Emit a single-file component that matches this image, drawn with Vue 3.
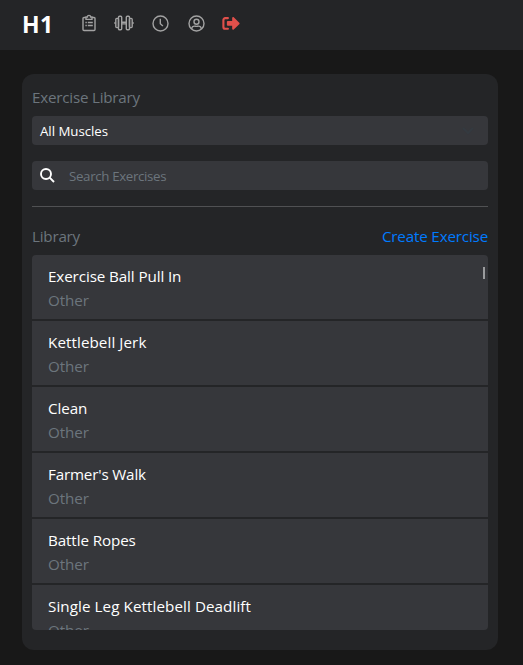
<script setup>
const exercises = [
  { name: 'Exercise Ball Pull In', tracking: 'normal' },
  { name: 'Kettlebell Jerk', tracking: 'wide' },
  { name: 'Clean', tracking: 'normal' },
  { name: "Farmer's Walk", tracking: 'tight' },
  { name: 'Battle Ropes', tracking: 'normal' },
  { name: 'Single Leg Kettlebell Deadlift', tracking: 'wide' },
]
</script>

<template>
  <div class="page">
    <header class="nav">
      <span class="brand">H1</span>
      <nav class="links">
        <svg class="icon clip" viewBox="0 0 14 18">
          <path d="M4 3.500H2a1 1 0 0 0-1 1v11a1 1 0 0 0 1 1h10a1 1 0 0 0 1-1v-11a1 1 0 0 0-1-1h-2M4 3h1.400a1.600 1.600 0 0 1 3.200 0H10v2.400H4z" />
          <path d="M3.400 8.500h1.400M5.800 8.500h5M3.400 11.500h1.400M5.800 11.500h5" />
        </svg>
        <svg class="icon bell" viewBox="0 0 20 16">
          <path d="M.2 8h1.600M18.200 8h1.600M7.900 7.200h4.200M7.900 8.900h4.200" />
          <rect x="1.800" y="3.400" width="2.700" height="9.200" rx="1" />
          <rect x="4.500" y="1.300" width="3.200" height="13.400" rx="1" />
          <rect x="12.300" y="1.300" width="3.200" height="13.400" rx="1" />
          <rect x="15.500" y="3.400" width="2.700" height="9.200" rx="1" />
        </svg>
        <svg class="icon round" viewBox="0 0 17 17">
          <circle cx="8.500" cy="8.500" r="7.500" />
          <path d="M8.300 3.800v5l2.600 2.300" />
        </svg>
        <svg class="icon round" viewBox="0 0 17 17">
          <circle cx="8.500" cy="8.500" r="7.500" />
          <circle cx="8.500" cy="6.700" r="2.500" />
          <path d="M3.500 14c.4-2 1.500-2.900 3-2.900.8 0 1.200.3 2 .3s1.200-.3 2-.3c1.500 0 2.600.9 3 2.900" />
        </svg>
        <svg class="exit" viewBox="0 0 17 14">
          <path class="door" d="M5.600 2H3a1.700 1.700 0 0 0-1.700 1.700v6.600A1.700 1.700 0 0 0 3 12h2.600" />
          <path class="arrow" d="M5.400 4.700h4.200V2c0-1 .9-1.300 1.500-.7l5.200 5c.4.400.4 1 0 1.400l-5.200 5c-.6.600-1.500.3-1.500-.7V9.300H5.400c-.5 0-.8-.3-.8-.8v-3c0-.5.3-.8.8-.8z" />
        </svg>
      </nav>
    </header>

    <main class="card">
      <h1 class="title">Exercise Library</h1>
      <div class="field select">
        <span class="value">All Muscles</span>
        <svg class="chevron" viewBox="0 0 12 8"><path d="M1 1l5 5 5-5" /></svg>
      </div>
      <label class="field search">
        <svg class="glass" viewBox="0 0 15 15">
          <circle cx="6" cy="6" r="5" /><path d="M9.700 9.700l4.300 4.300" />
        </svg>
        <span class="placeholder">Search Exercises</span>
      </label>
      <div class="rule"></div>
      <div class="heading">
        <span class="label">Library</span>
        <a class="create">Create Exercise</a>
      </div>
      <div class="list">
        <div v-for="item in exercises" :key="item.name" class="item">
          <div class="name" :class="item.tracking">{{ item.name }}</div>
          <div class="muscle">Other</div>
        </div>
        <div class="thumb"></div>
      </div>
    </main>
  </div>
</template>

<style>
body { background: #181818; overflow: hidden; }
</style>

<style scoped>
* { box-sizing: border-box; }
.page {
  width: 523px;
  height: 665px;
  overflow: hidden;
  background: #181818;
  font-family: "Open Sans", "Noto Sans", sans-serif;
  font-size: 15.2px;
  line-height: 24px;
  letter-spacing: -0.1px;
  color: #fff;
}
.nav { display: flex; align-items: center; height: 50px; padding: 0 22px; background: #242527; }
.brand { width: 59px; font-size: 23px; font-weight: 700; line-height: 30px; letter-spacing: 0.5px; padding-bottom: 3px; }
.links { display: flex; align-items: center; height: 100%; padding-bottom: 4px; }
.icon { fill: none; stroke: #a2a2a2; stroke-width: 1.4; }
.clip { width: 14px; height: 18px; margin: -1px 0 0 0.5px; }
.bell { width: 20px; height: 16px; margin-left: 18.5px; }
.round { width: 17px; height: 17px; margin-left: 18px; }
.round + .round { margin-left: 19px; }
.exit { width: 18px; height: 14.800px; margin-left: 17px; }
.door { fill: none; stroke: #e0504b; stroke-width: 2; stroke-linecap: round; }
.arrow { fill: #e0504b; }
.card { width: 476px; height: 576px; margin: 24px 0 0 22px; padding: 11px 10px 20px; border-radius: 12px; background: #242527; }
.title { margin: 0 0 7px; font-size: inherit; font-weight: 400; letter-spacing: -0.22px; color: #6c757d; }
.field { display: flex; align-items: center; height: 29px; border-radius: 4px; background: #36373b; font-size: 13.3px; }
.select { justify-content: space-between; padding: 0 14px 0 8px; margin-bottom: 16px; }
.value { letter-spacing: -0.05px; }
.chevron { width: 12px; height: 8px; fill: none; stroke: #343a40; stroke-width: 2; }
.search { padding-left: 8px; gap: 14px; }
.glass { width: 15px; height: 15px; fill: none; stroke: #fff; stroke-width: 1.9; }
.placeholder { letter-spacing: -0.34px; color: #6c757d; }
.rule { height: 1px; margin: 16px 0 17px; background: #505153; }
.heading { display: flex; justify-content: space-between; margin-bottom: 7px; }
.label, .muscle { color: #6c757d; }
.label { letter-spacing: -0.22px; }
.create { letter-spacing: -0.17px; color: #007bff; }
.list { position: relative; display: flex; flex-direction: column; gap: 2px; height: 375px; overflow: hidden; border-radius: 4px; }
.item { flex: 0 0 64px; padding: 9px 16px 7px; background: #36373b; }
.wide { letter-spacing: 0.08px; }
.tight { letter-spacing: -0.17px; }
.thumb { position: absolute; top: 12px; right: 3px; width: 2px; height: 12px; background: #9a9b9d; }
</style>
